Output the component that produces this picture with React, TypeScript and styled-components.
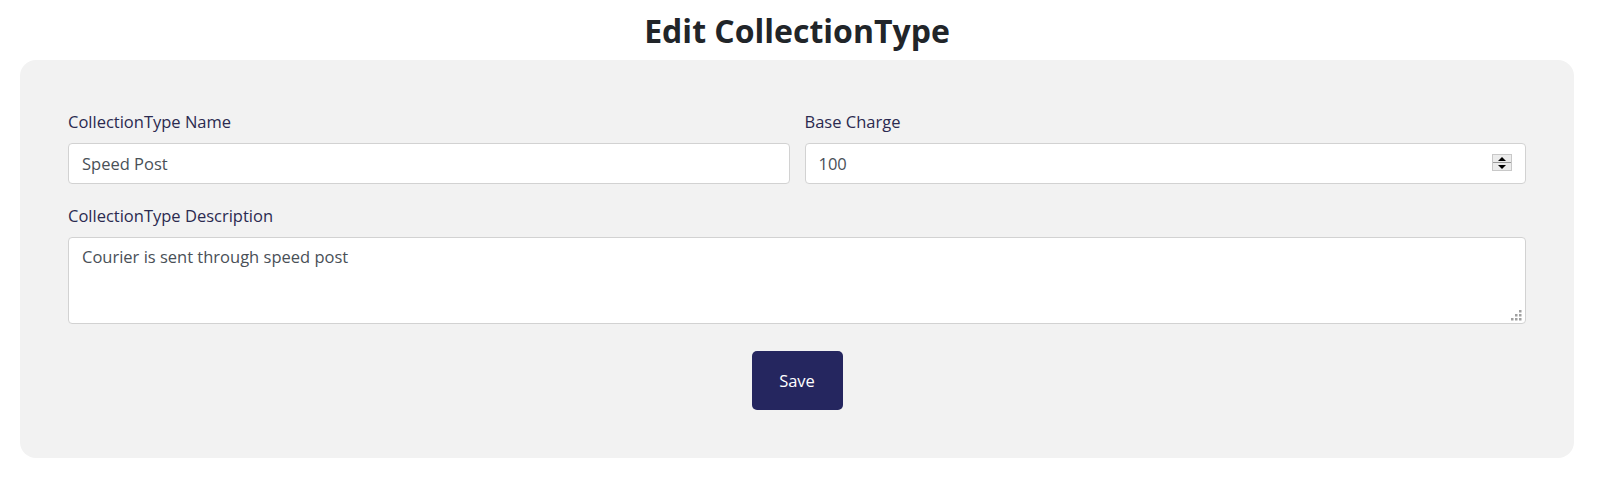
import React from "react";
import styled, { createGlobalStyle } from "styled-components";

const GlobalStyle = createGlobalStyle`
  html, body { margin: 0; padding: 0; background: #ffffff; }
  body { font-family: "Open Sans", "Noto Sans", "Liberation Sans", sans-serif; color: #212529; }
  * { box-sizing: border-box; }
`;

const Page = styled.div`
  width: 1554px;
  margin-left: 20px;
  padding-top: 11px;
`;

const Title = styled.h1`
  margin: 0 0 9px;
  font-size: 32px;
  line-height: 40px;
  font-weight: 700;
  text-align: center;
  color: #212529;
`;

const Card = styled.form`
  background: #f2f2f2;
  border-radius: 16px;
  padding: 48px 48px 48px;
  display: flex;
  flex-direction: column;
`;

const Row = styled.div`
  display: grid;
  grid-template-columns: 1fr 1fr;
  column-gap: 15px;
`;

const Field = styled.div<{ $mt?: number }>`
  display: flex;
  flex-direction: column;
  margin-top: ${(p) => p.$mt ?? 0}px;
`;

const Label = styled.label`
  font-size: 16.5px;
  line-height: 24px;
  color: #2b2a50;
  margin-bottom: 9px;
  padding-top: 2px;
`;

const InputWrap = styled.div`
  position: relative;
`;

const Input = styled.input`
  width: 100%;
  height: 41px;
  padding: 6px 13px;
  font-family: inherit;
  font-size: 16.5px;
  color: #495057;
  background: #fff;
  border: 1px solid #d2d2d2;
  border-radius: 4px;
  outline: none;
  -moz-appearance: textfield;
  &::-webkit-outer-spin-button,
  &::-webkit-inner-spin-button {
    -webkit-appearance: none;
    margin: 0;
  }
`;

const Spinner = styled.div`
  position: absolute;
  right: 14px;
  top: 11px;
  width: 20px;
  height: 17px;
  display: flex;
  flex-direction: column;
  border: 1px solid #c8c8c8;
  background: #ececec;
  pointer-events: none;
`;

const SpinHalf = styled.div<{ $down?: boolean }>`
  flex: 1;
  display: flex;
  align-items: center;
  justify-content: center;
  border-top: ${(p) => (p.$down ? "1px solid #9a9a9a" : "none")};
`;

const TextArea = styled.textarea`
  width: 100%;
  height: 87px;
  padding: 7px 13px;
  font-family: inherit;
  font-size: 16.5px;
  line-height: 24px;
  color: #495057;
  background: #fff;
  border: 1px solid #d2d2d2;
  border-radius: 4px;
  resize: none;
  outline: none;
  display: block;
`;

const Grip = styled.svg`
  position: absolute;
  right: 4px;
  bottom: 3px;
  pointer-events: none;
`;

const Actions = styled.div`
  display: flex;
  justify-content: center;
  margin-top: 27px;
`;

const Button = styled.button`
  width: 91px;
  height: 59px;
  background: #25265f;
  color: #ffffff;
  border: none;
  border-radius: 5px;
  font-family: inherit;
  font-size: 16.5px;
  cursor: pointer;
`;

export default function App() {
  return (
    <>
      <GlobalStyle />
      <Page>
        <Title>Edit CollectionType</Title>
        <Card onSubmit={(e) => e.preventDefault()}>
          <Row>
            <Field>
              <Label htmlFor="name">CollectionType Name</Label>
              <Input id="name" type="text" defaultValue="Speed Post" />
            </Field>
            <Field>
              <Label htmlFor="charge">Base Charge</Label>
              <InputWrap>
                <Input id="charge" type="number" defaultValue={100} />
                <Spinner>
                  <SpinHalf>
                    <svg width="8" height="4" viewBox="0 0 8 4">
                      <polygon points="4,0 8,4 0,4" fill="#000" />
                    </svg>
                  </SpinHalf>
                  <SpinHalf $down>
                    <svg width="8" height="4" viewBox="0 0 8 4">
                      <polygon points="0,0 8,0 4,4" fill="#000" />
                    </svg>
                  </SpinHalf>
                </Spinner>
              </InputWrap>
            </Field>
          </Row>
          <Field $mt={18}>
            <Label htmlFor="desc">CollectionType Description</Label>
            <InputWrap>
              <TextArea id="desc" defaultValue="Courier is sent through speed post" />
              <Grip width="11" height="11" viewBox="0 0 11 11">
                <rect x="8" y="0" width="2.5" height="2.5" fill="#a0a0a0" />
                <rect x="4" y="4" width="2.5" height="2.5" fill="#a0a0a0" />
                <rect x="8" y="4" width="2.5" height="2.5" fill="#a0a0a0" />
                <rect x="0" y="8" width="2.5" height="2.5" fill="#a0a0a0" />
                <rect x="4" y="8" width="2.5" height="2.5" fill="#a0a0a0" />
                <rect x="8" y="8" width="2.5" height="2.5" fill="#a0a0a0" />
              </Grip>
            </InputWrap>
          </Field>
          <Actions>
            <Button type="submit">Save</Button>
          </Actions>
        </Card>
      </Page>
    </>
  );
}
